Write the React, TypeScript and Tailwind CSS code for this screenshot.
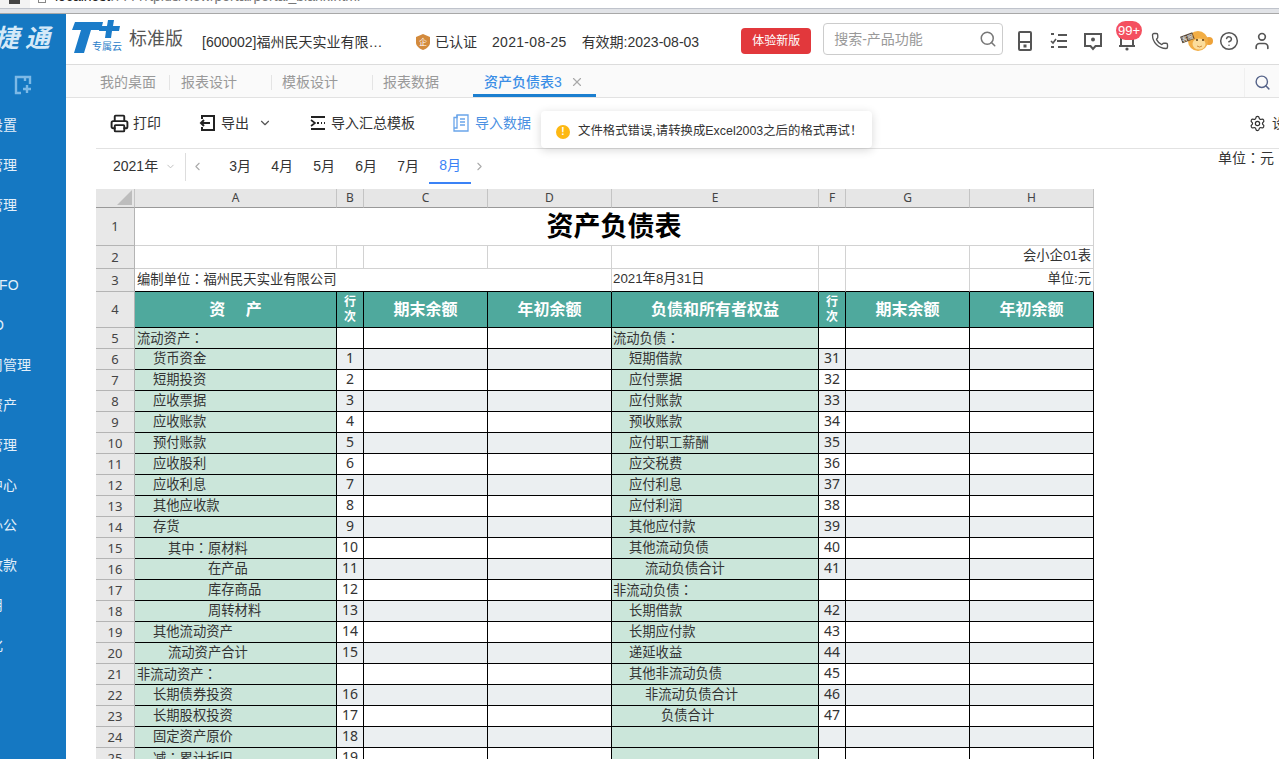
import React from 'react';
import { ChevronDown, ChevronLeft, ChevronRight, CircleHelp, Phone, Printer, Search, Settings, User, X } from 'lucide-react';

const sideItems = ['设置', '管理', '管理', '', 'UFO', 'IO', '周管理', '资产', '管理', '中心', '办公', '收款', '用', '化'];

const gridCols = 'grid grid-cols-[39px_202px_27px_124px_124px_207px_27px_124px_124px]';

type Row = { no: number; a: string; ai: string; b: string; e: string; ei: string; f: string };

const rows: Row[] = [
  { no: 5, a: '流动资产：', ai: 'pl-[2px]', b: '', e: '流动负债：', ei: 'pl-[1px]', f: '' },
  { no: 6, a: '货币资金', ai: 'pl-[18px]', b: '1', e: '短期借款', ei: 'pl-[17px]', f: '31' },
  { no: 7, a: '短期投资', ai: 'pl-[18px]', b: '2', e: '应付票据', ei: 'pl-[17px]', f: '32' },
  { no: 8, a: '应收票据', ai: 'pl-[18px]', b: '3', e: '应付账款', ei: 'pl-[17px]', f: '33' },
  { no: 9, a: '应收账款', ai: 'pl-[18px]', b: '4', e: '预收账款', ei: 'pl-[17px]', f: '34' },
  { no: 10, a: '预付账款', ai: 'pl-[18px]', b: '5', e: '应付职工薪酬', ei: 'pl-[17px]', f: '35' },
  { no: 11, a: '应收股利', ai: 'pl-[18px]', b: '6', e: '应交税费', ei: 'pl-[17px]', f: '36' },
  { no: 12, a: '应收利息', ai: 'pl-[18px]', b: '7', e: '应付利息', ei: 'pl-[17px]', f: '37' },
  { no: 13, a: '其他应收款', ai: 'pl-[18px]', b: '8', e: '应付利润', ei: 'pl-[17px]', f: '38' },
  { no: 14, a: '存货', ai: 'pl-[18px]', b: '9', e: '其他应付款', ei: 'pl-[17px]', f: '39' },
  { no: 15, a: '其中：原材料', ai: 'pl-[33px]', b: '10', e: '其他流动负债', ei: 'pl-[17px]', f: '40' },
  { no: 16, a: '在产品', ai: 'pl-[73px]', b: '11', e: '流动负债合计', ei: 'pl-[33px]', f: '41' },
  { no: 17, a: '库存商品', ai: 'pl-[73px]', b: '12', e: '非流动负债：', ei: 'pl-[1px]', f: '' },
  { no: 18, a: '周转材料', ai: 'pl-[73px]', b: '13', e: '长期借款', ei: 'pl-[17px]', f: '42' },
  { no: 19, a: '其他流动资产', ai: 'pl-[18px]', b: '14', e: '长期应付款', ei: 'pl-[17px]', f: '43' },
  { no: 20, a: '流动资产合计', ai: 'pl-[33px]', b: '15', e: '递延收益', ei: 'pl-[17px]', f: '44' },
  { no: 21, a: '非流动资产：', ai: 'pl-[2px]', b: '', e: '其他非流动负债', ei: 'pl-[17px]', f: '45' },
  { no: 22, a: '长期债券投资', ai: 'pl-[18px]', b: '16', e: '非流动负债合计', ei: 'pl-[33px]', f: '46' },
  { no: 23, a: '长期股权投资', ai: 'pl-[18px]', b: '17', e: '负债合计', ei: 'pl-[49px]', f: '47' },
  { no: 24, a: '固定资产原价', ai: 'pl-[18px]', b: '18', e: '', ei: '', f: '' },
  { no: 25, a: '减：累计折旧', ai: 'pl-[18px]', b: '19', e: '', ei: '', f: '' },
];

// the sheet's full-width colon sits centred, as in the TC cut of the font
const Txt = ({ s }: { s: string }) => {
  const parts = s.split('：');
  return (
    <span>
      {parts.map((p, i) => (
        <React.Fragment key={i}>
          {p}
          {i < parts.length - 1 && <span className="font-['Noto_Sans_CJK_TC',sans-serif]">：</span>}
        </React.Fragment>
      ))}
    </span>
  );
};

const RowNo = ({ children }: { children: React.ReactNode }) => (
  <div className="flex items-center justify-center bg-[#e8e8e8] border-r border-b border-[#b4b4b4] text-[13px] text-[#444] font-['Noto_Sans',sans-serif]">
    {children}
  </div>
);

const ColHead = ({ label }: { label: string }) => (
  <div className="flex items-center justify-center bg-[#e6e6e6] border-r border-b border-r-[#c4c4c4] border-b-[#999] text-[12px] text-[#444] font-['Noto_Sans',sans-serif]">
    {label}
  </div>
);

const Blank = ({ className = '' }: { className?: string }) => (
  <div className={`border-r border-b border-[#d2d2d2] ${className}`} />
);

const HeadCell = ({ children, small }: { children: React.ReactNode; small?: boolean }) => (
  <div
    className={
      small
        ? 'flex items-center justify-center bg-[#4fa99d] border-r border-b border-black text-white font-bold text-[12px] leading-[15px] text-center'
        : 'flex items-center justify-center bg-[#4fa99d] border-r border-b border-black text-white font-bold text-[16px]'
    }
  >
    {children}
  </div>
);

const DataRow = ({ row }: { row: Row }) => {
  const fill = row.no % 2 === 0 ? 'bg-[#ebeff1]' : 'bg-white';
  const numCell = `flex items-center justify-center pb-[2px] border-r border-b border-black text-[14px] text-[#333] font-['Noto_Sans',sans-serif] ${fill}`;
  const blankCell = `border-r border-b border-black ${fill}`;
  const nameCell = 'flex items-center border-r border-b border-black bg-[#cbe6da] text-[13.3px] text-[#333] whitespace-nowrap';
  return (
    <div className={`${gridCols} h-[21px]`}>
      <RowNo>{row.no}</RowNo>
      <div className={`${nameCell} ${row.ai}`}><Txt s={row.a} /></div>
      <div className={numCell}>{row.b}</div>
      <div className={blankCell} />
      <div className={blankCell} />
      <div className={`${nameCell} ${row.ei}`}><Txt s={row.e} /></div>
      <div className={numCell}>{row.f}</div>
      <div className={blankCell} />
      <div className={blankCell} />
    </div>
  );
};

const Sheet = () => (
  <div className="w-[998px] mt-[5px] text-[#333] bg-white leading-none">
    <div className={`${gridCols} h-[19px]`}>
      <div className="flex items-end justify-end bg-[#e6e6e6] border-r border-b border-r-[#c4c4c4] border-b-[#999] pr-[2px] pb-[2px]">
        <svg width="15" height="15" viewBox="0 0 15 15">
          <path d="M15 0V15H0Z" fill="#bdbdbd" />
        </svg>
      </div>
      {['A', 'B', 'C', 'D', 'E', 'F', 'G', 'H'].map((c) => (
        <ColHead key={c} label={c} />
      ))}
    </div>

    <div className="grid grid-cols-[39px_959px] h-[38px]">
      <RowNo>1</RowNo>
      <div className="flex items-center justify-center pt-[2px] border-r border-b border-[#d2d2d2] text-[27px] font-bold text-black">资产负债表</div>
    </div>

    <div className={`${gridCols} h-[23px]`}>
      <RowNo>2</RowNo>
      <Blank />
      <Blank />
      <Blank />
      <Blank />
      <Blank />
      <Blank />
      <Blank />
      <div className="flex items-center justify-end pr-[2px] pb-[2px] border-r border-b border-[#d2d2d2] text-[13.3px]">会小企01表</div>
    </div>

    <div className="grid grid-cols-[39px_477px_207px_27px_124px_124px] h-[23px]">
      <RowNo>3</RowNo>
      <div className="flex items-center pl-[2px] pb-[2px] border-r border-b border-r-[#d2d2d2] border-b-black text-[13.3px]"><Txt s="编制单位：福州民天实业有限公司" /></div>
      <div className="flex items-center pl-[1px] pb-[2px] border-r border-b border-r-[#d2d2d2] border-b-black text-[13.3px]">2021年8月31日</div>
      <div className="border-r border-b border-r-[#d2d2d2] border-b-black" />
      <div className="border-r border-b border-r-[#d2d2d2] border-b-black" />
      <div className="flex items-center justify-end pr-[2px] pb-[2px] border-r border-b border-r-[#d2d2d2] border-b-black text-[13.3px]">单位:元</div>
    </div>

    <div className={`${gridCols} h-[36px]`}>
      <RowNo>4</RowNo>
      <HeadCell><span className="whitespace-pre">资　 产</span></HeadCell>
      <HeadCell small>行<br />次</HeadCell>
      <HeadCell>期末余额</HeadCell>
      <HeadCell>年初余额</HeadCell>
      <HeadCell>负债和所有者权益</HeadCell>
      <HeadCell small>行<br />次</HeadCell>
      <HeadCell>期末余额</HeadCell>
      <HeadCell>年初余额</HeadCell>
    </div>

    {rows.map((row) => (
      <DataRow key={row.no} row={row} />
    ))}
  </div>
);

const Logo = () => (
  <svg width="54" height="38" viewBox="0 0 54 38" className="shrink-0">
    <path d="M5 2H33L31 10H21L14 33H4L11 10H2Z" fill="#1b7cc9" />
    <path d="M38 0H44L43 6H50L49 11H42L41 18H35L36 11H29L30 6H37Z" fill="#1b7cc9" />
    <text x="22" y="30" fontSize="10" fill="#2b80c9" fontFamily="Noto Sans CJK SC, sans-serif">专属云</text>
  </svg>
);

const Monkey = () => (
  <svg width="34" height="24" viewBox="0 0 34 24" className="shrink-0">
    <circle cx="29" cy="12" r="4" fill="#eea238" />
    <circle cx="18" cy="12" r="10" fill="#f2ae45" />
    <ellipse cx="19" cy="15" rx="6.5" ry="5.5" fill="#fbdd9c" />
    <circle cx="17" cy="11" r="1" fill="#5b3a12" />
    <circle cx="23" cy="11" r="1" fill="#5b3a12" />
    <path d="M17 17Q19.500 19 22 17" fill="none" stroke="#c0762a" strokeWidth="0.8" />
    <g transform="rotate(-20 8 9)">
      <rect x="1" y="5" width="13" height="7" fill="#5a4630" />
      <text x="1.500" y="11" fontSize="6" fill="#fff" fontFamily="Noto Sans CJK SC, sans-serif">客服</text>
    </g>
  </svg>
);

const Header = () => (
  <header className="flex items-center h-[51px] shrink-0 border-b border-[#dcdcdc] bg-white pl-[4px] text-[14px] text-[#333] whitespace-nowrap">
    <Logo />
    <span className="ml-[5px] text-[18px] text-[#555]">标准版</span>
    <span className="ml-[19px] w-[184px] mt-[6px]">[600002]福州民天实业有限…</span>
    <svg width="14" height="16" viewBox="0 0 14 16" className="ml-[30px] mt-[6px]">
      <path d="M7 0L14 3V9C14 12 10 15 7 16C4 15 0 12 0 9V3Z" fill="#d38a3c" />
      <text x="3" y="11" fontSize="8" fill="#fff" fontFamily="Noto Sans CJK SC, sans-serif">企</text>
    </svg>
    <span className="ml-[5px] mt-[6px]">已认证</span>
    <span className="ml-[15px] mt-[6px] tracking-[0.3px]">2021-08-25</span>
    <span className="ml-[15px] mt-[6px]">有效期:2023-08-03</span>
    <button className="ml-[42px] w-[70px] h-[26px] mt-[3px] rounded bg-[#e2383c] text-white text-[12px]">体验新版</button>
    <div className="ml-[12px] flex items-center justify-between w-[180px] h-[32px] pl-[10px] pr-[5px] rounded border border-[#ccc] text-[#999] text-[14px]">
      <span>搜索-产品功能</span>
      <Search size={18} strokeWidth={2} className="text-[#777]" />
    </div>
    <div className="ml-[12px] flex items-center h-[30px] mt-[3px]">
      <svg width="20" height="22" viewBox="0 0 20 22" fill="none" stroke="#555" strokeWidth="2">
        <rect x="4" y="2" width="12" height="18" rx="1" />
        <path d="M4 12H16" />
        <rect x="8.500" y="14.500" width="3" height="3" fill="#555" stroke="none" />
      </svg>
      <svg width="20" height="20" viewBox="0 0 20 20" fill="none" stroke="#555" strokeWidth="2" className="ml-[14px]">
        <path d="M9 4H18M2 3H5M8 10H18M9 16H18M2 16H5" />
        <path d="M2 10L4 12L7 8" strokeWidth="1.600" />
      </svg>
      <svg width="20" height="20" viewBox="0 0 20 20" fill="none" stroke="#555" strokeWidth="2" className="ml-[14px]">
        <path d="M2 3H18V15H12.500L10 18L7.500 15H2Z" />
        <circle cx="10" cy="8.500" r="2" fill="#555" stroke="none" />
      </svg>
      <div className="relative ml-[14px] w-[20px] h-[20px]">
        <svg width="20" height="20" viewBox="0 0 20 20" fill="none" stroke="#555" strokeWidth="2">
          <path d="M4 15V5H16V15M2 15H18" />
          <circle cx="10" cy="18" r="1.600" fill="#555" stroke="none" />
        </svg>
        <span className="absolute left-[-1px] top-[-10px] w-[26px] h-[19px] rounded-full bg-[#f4505f] text-white text-[13px] leading-[19px] text-center">99+</span>
      </div>
      <Phone size={18} strokeWidth={1.8} className="ml-[14px] text-[#555]" />
      <div className="ml-[11px]">
        <Monkey />
      </div>
      <CircleHelp size={20} strokeWidth={1.8} className="ml-[5px] text-[#555]" />
      <User size={20} strokeWidth={2} className="ml-[13px] text-[#555]" />
    </div>
  </header>
);

const Tabs = () => (
  <nav className="flex items-center h-[33px] shrink-0 border-b border-[#e2e2e2] bg-[#fafafa] pt-[3px] pl-[34px] text-[14px] text-[#999] whitespace-nowrap">
    <span>我的桌面</span>
    <span className="ml-[13px] h-[15px] w-px bg-[#e4e4e4]" />
    <span className="ml-[11px]">报表设计</span>
    <span className="ml-[34px] h-[15px] w-px bg-[#e4e4e4]" />
    <span className="ml-[10px]">模板设计</span>
    <span className="ml-[34px] h-[15px] w-px bg-[#e4e4e4]" />
    <span className="ml-[10px]">报表数据</span>
    <div className="ml-[34px] flex items-center justify-between w-[123px] h-full pl-[11px] pr-[12px] pt-[2px] border-b-[3px] border-[#1b7fd0]">
      <span className="text-[#3a8ee6] font-medium">资产负债表3</span>
      <X size={14} className="text-[#aaa]" />
    </div>
    <div className="ml-auto flex items-center justify-center w-[35px] h-full border-l border-[#f0f0f0]">
      <Search size={17} strokeWidth={2} className="text-[#56648a]" />
    </div>
  </nav>
);

const Toolbar = () => (
  <div className="relative ml-[30px] flex items-center h-[51px] shrink-0 border-b border-[#e2e2e2] pl-[14px] text-[14px] text-[#333] whitespace-nowrap">
    <Printer size={19} strokeWidth={2.4} className="text-[#222]" />
    <span className="ml-[4px]">打印</span>
    <svg width="18" height="18" viewBox="0 0 18 18" fill="none" stroke="#222" strokeWidth="2" className="ml-[38px]">
      <path d="M3 5V2H15V16H3V13M11 9H2M5 6L2 9L5 12" />
    </svg>
    <span className="ml-[4px]">导出</span>
    <ChevronDown size={14} className="ml-[9px] text-[#555]" />
    <svg width="16" height="16" viewBox="0 0 16 16" fill="none" stroke="#222" strokeWidth="2" className="ml-[38px]">
      <path d="M1 2H15M1 14H15M7 8H9M11 8H12M14 8H15" />
      <path d="M1 5L5 8L1 11" strokeWidth="1.600" />
    </svg>
    <span className="ml-[5px]">导入汇总模板</span>
    <svg width="18" height="18" viewBox="0 0 18 18" fill="none" stroke="#6aa5ea" strokeWidth="1.300" className="ml-[37px]">
      <path d="M5 1H16V17H2V3.500H5Z" />
      <path d="M5 1V14H2M8 5H13M8 8H13M8 11H13" />
    </svg>
    <span className="ml-[5px] text-[#4a90e2]">导入数据</span>
    <div className="ml-auto mr-[-21px] flex items-center gap-[6px]">
      <Settings size={17} strokeWidth={1.7} className="text-[#333]" />
      <span>设置</span>
    </div>
    <div className="absolute left-[445px] top-[13px] flex items-center w-[331px] h-[37px] pl-[15px] pt-[4px] rounded bg-white shadow-[0_2px_10px_rgba(0,0,0,0.16)] text-[12.4px] text-[#333]">
      <span className="flex items-center justify-center w-[14px] h-[14px] rounded-full bg-[#fdb813] text-white text-[10px] font-bold">!</span>
      <span className="ml-[8px]">文件格式错误,请转换成Excel2003之后的格式再试！</span>
    </div>
  </div>
);

const MonthBar = () => (
  <div className="ml-[30px] flex h-[35px] shrink-0 text-[14px] text-[#333] whitespace-nowrap">
    <div className="flex items-center h-full pl-[17px]">
      <span>2021年</span>
      <ChevronDown size={11} className="ml-[7px] text-[#bbb]" />
      <span className="ml-[9px] h-[28px] w-px bg-[#ddd]" />
      <ChevronLeft size={13} className="ml-[5px] text-[#aaa]" />
    </div>
    <div className="flex h-full ml-[25px] gap-[20px]">
      {['3月', '4月', '5月', '6月', '7月'].map((m) => (
        <span key={m} className="flex items-center w-[22px] h-full">{m}</span>
      ))}
    </div>
    <span className="ml-[10px] flex items-center justify-center w-[42px] h-full border-b-2 border-[#3b82f6] text-[#3b82f6]">8月</span>
    <div className="flex items-center h-full ml-[2px]">
      <ChevronRight size={13} className="text-[#aaa]" />
    </div>
    <span className="ml-auto mr-[5px] h-[16px] leading-[16px]"><Txt s="单位：元" /></span>
  </div>
);

export default function App() {
  return (
    <div className="flex flex-col w-[1279px] h-[759px] overflow-hidden bg-white font-['Liberation_Sans','Noto_Sans_CJK_SC',sans-serif]">
      {/* browser chrome cut off by the capture */}
      <div className="shrink-0 h-[14px] overflow-hidden bg-[#e1e3e7] border-b border-[#a8a8a8]">
        <div className="flex h-[9px] border-b border-[#bfc3cb] bg-[#f3f3f3]">
          <div className="w-[30px] pl-[9px]">
            <div className="w-[11px] h-[4px] bg-[#444]" />
          </div>
          <div className="flex-1 flex items-end bg-white pl-[8px] pb-[5px] text-[14px] leading-[14px] text-[#777] whitespace-nowrap">
            <span className="w-[8px] h-[3px] self-start border-x border-b border-[#888]" />
            <span className="text-[#222] ml-[9px]">localhost</span>:7777/tplus/view/portal/portal_blank.html
          </div>
        </div>
      </div>

      <div className="flex flex-1 min-h-0">
        <aside className="w-[66px] shrink-0 overflow-hidden bg-[#1578c2] text-[14px] text-[#e3eff9] whitespace-nowrap">
          <div className="flex items-center h-[50px] ml-[-37px] text-[25px] font-semibold italic tracking-[6px] text-[#d4e9f8]">畅捷通</div>
          <div className="flex items-center h-[41px] pl-[14px]">
            <svg width="18" height="20" viewBox="0 0 18 20" fill="none" stroke="#7db9e6" strokeWidth="2.400">
              <path d="M7 18H2V2H16V9M9 14H17M13 10V18M11 2V6" />
            </svg>
          </div>
          {sideItems.map((item, idx) => (
            <div key={idx} className="flex items-center h-[40px] ml-[-11px]">{item}</div>
          ))}
        </aside>

        <main className="flex flex-col flex-1 min-w-0 overflow-hidden">
          <Header />
          <Tabs />
          <Toolbar />
          <MonthBar />
          <div className="ml-[30px]">
            <Sheet />
          </div>
        </main>
      </div>
    </div>
  );
}
